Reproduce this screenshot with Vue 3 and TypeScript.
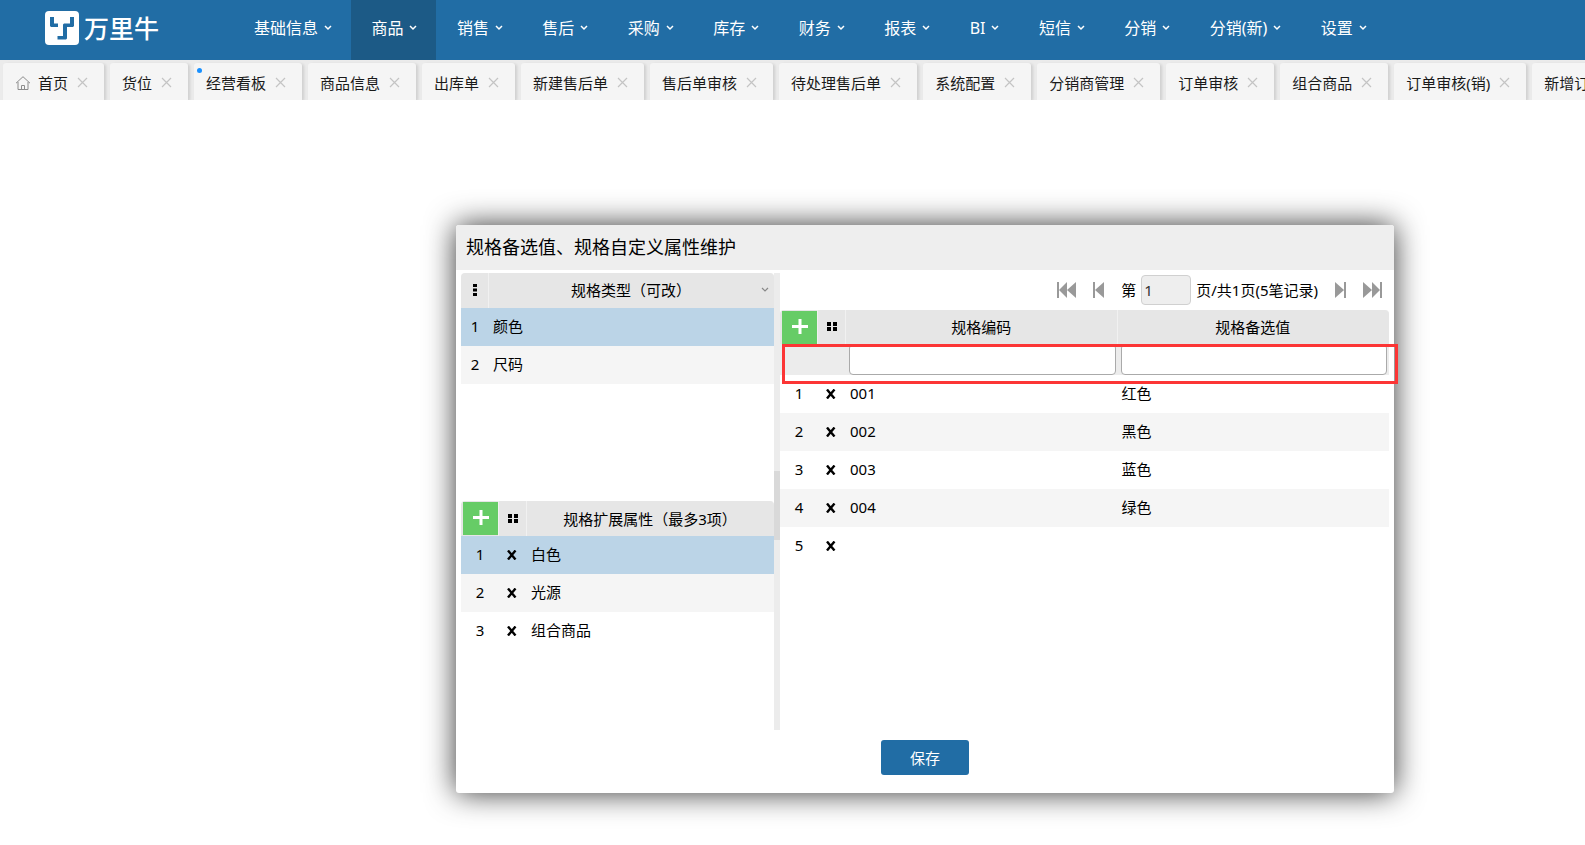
<script setup lang="ts">
import { ref } from 'vue'

interface NavItem {
  label: string
  active?: boolean
}

interface Tab {
  label: string
  home?: boolean
  dot?: boolean
}

interface SpecValue {
  code: string
  value: string
}

const navItems: NavItem[] = [
  { label: '基础信息' },
  { label: '商品', active: true },
  { label: '销售' },
  { label: '售后' },
  { label: '采购' },
  { label: '库存' },
  { label: '财务' },
  { label: '报表' },
  { label: 'BI' },
  { label: '短信' },
  { label: '分销' },
  { label: '分销(新)' },
  { label: '设置' },
]

const tabs: Tab[] = [
  { label: '首页', home: true },
  { label: '货位' },
  { label: '经营看板', dot: true },
  { label: '商品信息' },
  { label: '出库单' },
  { label: '新建售后单' },
  { label: '售后单审核' },
  { label: '待处理售后单' },
  { label: '系统配置' },
  { label: '分销商管理' },
  { label: '订单审核' },
  { label: '组合商品' },
  { label: '订单审核(销)' },
  { label: '新增订单' },
]

const specTypes = ['颜色', '尺码']
const extraProps = ['白色', '光源', '组合商品']
const specValues: SpecValue[] = [
  { code: '001', value: '红色' },
  { code: '002', value: '黑色' },
  { code: '003', value: '蓝色' },
  { code: '004', value: '绿色' },
  { code: '', value: '' },
]

const selectedType = ref(0)
const selectedProp = ref(0)
const page = ref('1')
const codeFilter = ref('')
const valueFilter = ref('')
</script>

<template>
  <div class="app">
    <header class="topbar">
      <a class="brand" href="#">
        <svg class="brand-mark" viewBox="0 0 34 34" aria-hidden="true">
          <rect width="34" height="34" rx="4" fill="#fff" />
          <path
            d="M5 6h4v6.500h4V16H6l-1-1zM25 6h4v9l-1 1h-6v11.500l-1 1h-8.500V25H18V13.500l1-1h6z"
            fill="#216da5"
          />
        </svg>
        <span class="brand-name">万里牛</span>
      </a>
      <nav class="nav">
        <a
          v-for="item in navItems"
          :key="item.label"
          href="#"
          class="nav-item"
          :class="{ active: item.active }"
        >
          <span>{{ item.label }}</span>
          <svg class="nav-arrow" viewBox="0 0 8 6" aria-hidden="true">
            <path d="M1 1l3 3 3-3" fill="none" stroke="currentColor" stroke-width="1.500" />
          </svg>
        </a>
      </nav>
    </header>

    <div class="tabs">
      <div v-for="tab in tabs" :key="tab.label" class="tab">
        <i v-if="tab.dot" class="tab-dot"></i>
        <svg v-if="tab.home" class="home-icon" viewBox="0 0 16 16" aria-hidden="true">
          <path
            d="M1 8.200L8 1.700l7 6.500M3 7v7.500h10V7M6.500 14.500v-4h3v4"
            fill="none"
            stroke="#8c8c8c"
          />
        </svg>
        <a href="#" class="tab-link">{{ tab.label }}</a>
        <button type="button" class="tab-close" :aria-label="'关闭' + tab.label">
          <svg viewBox="0 0 11 11" aria-hidden="true">
            <path d="M1 1l9 9M10 1l-9 9" stroke="#c4c4c4" stroke-width="1.200" />
          </svg>
        </button>
      </div>
    </div>

    <main class="workspace">
      <section class="dialog" role="dialog" aria-labelledby="dialog-title">
        <h1 id="dialog-title" class="dialog-title">规格备选值、规格自定义属性维护</h1>

        <div class="dialog-body">
          <div class="left">
            <div class="block">
              <table class="grid">
                <colgroup>
                  <col class="c-narrow" />
                  <col />
                </colgroup>
                <thead>
                  <tr>
                    <th class="icon-cell">
                      <svg class="dots" viewBox="0 0 10 12" aria-hidden="true">
                        <path d="M3 0h4v3H3zM3 4.500h4v3H3zM3 9h4v3H3z" />
                      </svg>
                    </th>
                    <th class="with-arrow">
                      <div class="head-flex">
                        <span class="head-text">规格类型（可改）</span>
                        <svg class="head-arrow" viewBox="0 0 8 6" aria-hidden="true">
                          <path d="M1 1l3 3 3-3" fill="none" stroke="#888" stroke-width="1.200" />
                        </svg>
                      </div>
                    </th>
                  </tr>
                </thead>
                <tbody>
                  <tr
                    v-for="(name, i) in specTypes"
                    :key="name"
                    :class="{ selected: i === selectedType }"
                    @click="selectedType = i"
                  >
                    <td class="center">{{ i + 1 }}</td>
                    <td>{{ name }}</td>
                  </tr>
                </tbody>
              </table>
            </div>

            <div class="block">
              <table class="grid">
                <colgroup>
                  <col class="c-num" />
                  <col class="c-icon" />
                  <col />
                </colgroup>
                <thead>
                  <tr>
                    <th class="add-cell">
                      <button type="button" class="add" aria-label="新增属性">
                        <svg viewBox="0 0 16 16" aria-hidden="true">
                          <path d="M8 0v15M0 7.500h16" stroke="#fff" stroke-width="3" />
                        </svg>
                      </button>
                    </th>
                    <th class="icon-cell">
                      <svg class="dots" viewBox="0 0 10 12" aria-hidden="true">
                        <path d="M0 2h4v4H0zM6 2h4v4H6zM0 7h4v4H0zM6 7h4v4H6z" />
                      </svg>
                    </th>
                    <th>规格扩展属性（最多3项）</th>
                  </tr>
                </thead>
                <tbody>
                  <tr
                    v-for="(name, i) in extraProps"
                    :key="name"
                    :class="{ selected: i === selectedProp }"
                    @click="selectedProp = i"
                  >
                    <td class="center">{{ i + 1 }}</td>
                    <td class="icon-cell">
                      <button type="button" class="remove" :aria-label="'删除' + name">
                        <svg viewBox="0 0 10 10" aria-hidden="true">
                          <path d="M1 .5l7.500 9M8.500 .5L1 9.500" stroke="#000" stroke-width="2.400" />
                        </svg>
                      </button>
                    </td>
                    <td>{{ name }}</td>
                  </tr>
                </tbody>
              </table>
            </div>
          </div>

          <div class="splitter"><i class="splitter-thumb"></i></div>

          <div class="right">
            <div class="pager">
              <button type="button" class="page-btn wide" aria-label="首页">
                <svg viewBox="0 0 19 16" aria-hidden="true">
                  <path d="M0 0h2v16H0zM10 0v16L2 8zM19 0v16L10 8z" />
                </svg>
              </button>
              <button type="button" class="page-btn" aria-label="上一页">
                <svg viewBox="0 0 11 16" aria-hidden="true">
                  <path d="M0 0h2v16H0zM11 0v16L2 8z" />
                </svg>
              </button>
              <label class="page-label" for="page-input">第</label>
              <input id="page-input" v-model="page" class="page-input" type="text" />
              <span class="page-total">页/共1页(5笔记录)</span>
              <button type="button" class="page-btn" aria-label="下一页">
                <svg viewBox="0 0 11 16" aria-hidden="true">
                  <path d="M9 0h2v16H9zM0 0v16l9-8z" />
                </svg>
              </button>
              <button type="button" class="page-btn wide" aria-label="末页">
                <svg viewBox="0 0 19 16" aria-hidden="true">
                  <path d="M17 0h2v16h-2zM0 0v16l9-8zM9 0v16l8-8z" />
                </svg>
              </button>
            </div>

            <div class="values">
              <table class="grid">
                <colgroup>
                  <col class="c-num" />
                  <col class="c-icon" />
                  <col />
                  <col />
                </colgroup>
                <thead>
                  <tr>
                    <th class="add-cell">
                      <button type="button" class="add" aria-label="新增备选值">
                        <svg viewBox="0 0 16 16" aria-hidden="true">
                          <path d="M8 0v15M0 7.500h16" stroke="#fff" stroke-width="3" />
                        </svg>
                      </button>
                    </th>
                    <th class="icon-cell">
                      <svg class="dots" viewBox="0 0 10 12" aria-hidden="true">
                        <path d="M0 2h4v4H0zM6 2h4v4H6zM0 7h4v4H0zM6 7h4v4H6z" />
                      </svg>
                    </th>
                    <th>规格编码</th>
                    <th>规格备选值</th>
                  </tr>
                  <tr class="filters">
                    <td colspan="2"></td>
                    <td>
                      <input v-model="codeFilter" class="filter" type="text" aria-label="规格编码" />
                    </td>
                    <td>
                      <input v-model="valueFilter" class="filter" type="text" aria-label="规格备选值" />
                    </td>
                  </tr>
                </thead>
                <tbody>
                  <tr v-for="(row, i) in specValues" :key="i">
                    <td class="center">{{ i + 1 }}</td>
                    <td class="icon-cell">
                      <button type="button" class="remove" :aria-label="'删除第' + (i + 1) + '行'">
                        <svg viewBox="0 0 10 10" aria-hidden="true">
                          <path d="M1 .5l7.500 9M8.500 .5L1 9.500" stroke="#000" stroke-width="2.400" />
                        </svg>
                      </button>
                    </td>
                    <td>{{ row.code }}</td>
                    <td>{{ row.value }}</td>
                  </tr>
                </tbody>
              </table>
              <div class="highlight"></div>
            </div>
          </div>
        </div>

        <footer class="dialog-footer">
          <button type="button" class="save">保存</button>
        </footer>
      </section>
    </main>
  </div>
</template>

<style>
body {
  margin: 0;
  background: #fff;
  overflow-x: hidden;
}
</style>

<style scoped>
.app,
.app * {
  box-sizing: border-box;
}

.app {
  font-family: "Noto Sans", "Noto Sans CJK SC", sans-serif;
  font-size: 15px;
  line-height: 20px;
  color: #000;
}

button,
input {
  font: inherit;
  color: inherit;
}

button {
  padding: 0;
  border: 0;
  background: none;
  cursor: pointer;
}

a {
  color: inherit;
  text-decoration: none;
}

svg {
  display: block;
}

.topbar {
  display: flex;
  align-items: stretch;
  height: 60px;
  padding: 0 199px 0 45px;
  background: #216da5;
  color: #fff;
}

.brand {
  display: flex;
  flex: none;
  align-items: center;
  gap: 5px;
  width: 189px;
  height: 56px;
}

.brand-mark {
  width: 34px;
  height: 34px;
}

.brand-name {
  font-size: 25px;
  font-weight: 500;
  line-height: 32px;
}

.nav {
  display: flex;
  flex: 1;
  justify-content: space-between;
}

.nav-item {
  display: flex;
  align-items: center;
  gap: 6px;
  padding: 0 19px 4px 20px;
  font-size: 16px;
  white-space: nowrap;
}

.nav-item.active {
  background: #1c5a86;
}

.nav-arrow {
  width: 8px;
  height: 6px;
}

.tabs {
  display: flex;
  gap: 6px;
  height: 40px;
  padding: 3px 0 0 3px;
  overflow: hidden;
  background: #ebebeb;
}

.tab {
  position: relative;
  display: flex;
  flex: none;
  align-items: center;
  padding: 2px 16px 0 12px;
  border-radius: 3px 3px 0 0;
  background: #f5f5f5;
  box-shadow: 2px 1px 3px rgba(0, 0, 0, 0.12);
  color: #1a1a1a;
}

.tab-dot {
  position: absolute;
  top: 5px;
  left: 3px;
  width: 5px;
  height: 5px;
  border-radius: 50%;
  background: #1890ff;
}

.home-icon {
  width: 16px;
  height: 16px;
  margin-right: 7px;
}

.tab-link {
  white-space: nowrap;
}

.tab-close {
  width: 11px;
  height: 11px;
  margin-left: 9px;
}

.workspace {
  padding: 125px 191px 52px 456px;
}

.dialog {
  border-radius: 3px;
  background: #fff;
  box-shadow: 0 0 30px rgba(0, 0, 0, 0.8);
}

.dialog-title {
  margin: 0;
  padding: 10px 10px 11px;
  border-radius: 3px 3px 0 0;
  background: #eee;
  font-size: 18px;
  font-weight: 400;
  line-height: 24px;
}

.dialog-body {
  display: grid;
  grid-template-columns: minmax(0, 313fr) 6px minmax(0, 609fr);
  padding: 3px 5px 0;
}

.left {
  display: grid;
  grid-template-rows: minmax(228px, auto) minmax(229px, auto);
}

.splitter {
  display: flex;
  flex-direction: column;
  justify-content: center;
  padding-top: 8px;
  background: #ececec;
}

.splitter-thumb {
  height: 69px;
  background: #d9d9d9;
}

.grid {
  width: 100%;
  table-layout: fixed;
  border-collapse: separate;
  border-spacing: 0;
}

.c-narrow {
  width: 28px;
}

.c-num {
  width: 38px;
}

.c-icon {
  width: 28px;
}

th {
  height: 35px;
  padding: 0;
  border-right: 1px solid #f1f1f1;
  background: #e6e6e6;
  font-weight: 400;
  white-space: nowrap;
}

th:first-child {
  border-top-left-radius: 4px;
}

th:last-child {
  border-right-color: #e6e6e6;
  border-top-right-radius: 4px;
}

tbody td {
  height: 38px;
  padding: 0 4px 2px;
}

tbody tr:nth-child(even) {
  background: #f5f5f5;
}

tbody tr.selected {
  background: #bbd4e7;
}

td.center {
  padding: 0 0 2px;
  text-align: center;
}

td.icon-cell {
  padding: 0 2px 0 0;
}

.dots {
  width: 10px;
  height: 12px;
  margin: 0 auto;
}

th.icon-cell {
  padding-bottom: 2px;
}

.head-flex {
  display: flex;
  align-items: center;
  padding-bottom: 2px;
}

.head-text {
  flex: 1;
  padding-left: 12px;
}

.head-arrow {
  width: 8px;
  height: 6px;
  margin-right: 4px;
}

.add-cell {
  padding: 1px 0 0 2px;
  vertical-align: top;
}

.add {
  display: flex;
  align-items: center;
  justify-content: center;
  width: 100%;
  height: 33px;
  padding-bottom: 2px;
  background: #66cc66;
}

.add svg {
  width: 16px;
  height: 16px;
}

.remove {
  display: block;
  margin: 0 auto;
}

.remove svg {
  width: 10px;
  height: 10px;
}

.pager {
  display: flex;
  align-items: center;
  justify-content: flex-end;
  height: 37px;
  padding: 0 7px 4px 0;
  white-space: nowrap;
}

.page-btn {
  width: 11px;
  margin-right: 17px;
}

.page-btn.wide {
  width: 19px;
}

.page-btn.wide:last-child {
  margin-right: 0;
}

.page-btn svg {
  width: 100%;
  height: 16px;
  fill: #999;
}

.page-input {
  width: 50px;
  height: 30px;
  margin: 0 5px;
  padding: 0 2px;
  border: 1px solid #d0d0d0;
  border-radius: 4px;
  background: #eee;
  color: #333;
}

.page-total {
  margin-right: 17px;
}

.values {
  position: relative;
}

.values th {
  height: 34px;
}

.filters td {
  height: 31px;
  padding: 0 2px 0 3px;
  background: #ececec;
}

.filter {
  display: block;
  width: 100%;
  height: 31px;
  padding: 0 5px;
  border: 1px solid #aaa;
  border-radius: 4px;
  background: #fff;
}

.highlight {
  position: absolute;
  top: 34px;
  right: -9px;
  left: 2px;
  height: 40px;
  border: 3px solid #fc3535;
  pointer-events: none;
}

.dialog-footer {
  display: flex;
  justify-content: center;
  padding: 10px 0 18px;
}

.save {
  width: 88px;
  height: 35px;
  border-radius: 3px;
  background: #216da5;
  color: #fff;
}
</style>
